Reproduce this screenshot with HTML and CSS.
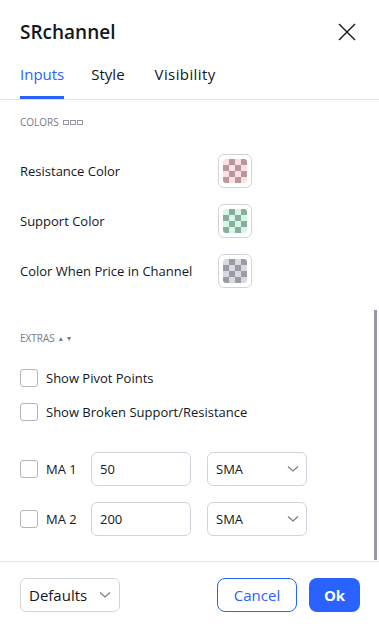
FILE: index.html
```html
<!DOCTYPE html>
<html lang="en">
<head>
  <meta charset="UTF-8" />
  <meta name="viewport" content="width=device-width, initial-scale=1.0"/>
  <title>SRchannel</title>
  <link rel="stylesheet" href="styles.css">
</head>
<body>
  <div class="dialog">
    <div class="header">
      <h1 class="title">SRchannel</h1>
      <button class="close" aria-label="Close">
        <svg width="18" height="18" viewBox="0 0 18 18"><path d="M1 1l16 16M17 1L1 17" stroke="#131722" stroke-width="1.4" fill="none"/></svg>
      </button>
    </div>
    <div class="tabs">
      <div class="tab active">Inputs</div>
      <div class="tab">Style</div>
      <div class="tab">Visibility</div>
    </div>

    <div class="content">
      <div class="group-title">COLORS <span class="boxes"><i></i><i></i><i></i></span></div>

      <div class="row">
        <span class="label">Resistance Color</span>
        <div class="swatch"><div class="checker pink"></div></div>
      </div>
      <div class="row">
        <span class="label">Support Color</span>
        <div class="swatch"><div class="checker green"></div></div>
      </div>
      <div class="row">
        <span class="label">Color When Price in Channel</span>
        <div class="swatch"><div class="checker gray"></div></div>
      </div>

      <div class="group-title extras">EXTRAS <span class="arrows">▴ ▾</span></div>

      <label class="check-row"><span class="box"></span>Show Pivot Points</label>
      <label class="check-row"><span class="box"></span>Show Broken Support/Resistance</label>

      <div class="ma-rows">
        <div class="ma-row">
          <label class="ma-check"><span class="box"></span>MA 1</label>
          <div class="field">50</div>
          <div class="field select">SMA
            <svg width="12" height="8" viewBox="0 0 12 8"><path d="M1 1.5l5 4.5 5-4.5" stroke="#787b86" stroke-width="1.2" fill="none"/></svg>
          </div>
        </div>
        <div class="ma-row">
          <label class="ma-check"><span class="box"></span>MA 2</label>
          <div class="field">200</div>
          <div class="field select">SMA
            <svg width="12" height="8" viewBox="0 0 12 8"><path d="M1 1.5l5 4.5 5-4.5" stroke="#787b86" stroke-width="1.2" fill="none"/></svg>
          </div>
        </div>
      </div>

      <div class="scroll-thumb"></div>
    </div>

    <div class="footer">
      <div class="defaults">Defaults
        <svg width="12" height="8" viewBox="0 0 12 8"><path d="M1 1.5l5 4.5 5-4.5" stroke="#787b86" stroke-width="1.2" fill="none"/></svg>
      </div>
      <div class="actions">
        <button class="btn cancel">Cancel</button>
        <button class="btn ok">Ok</button>
      </div>
    </div>
  </div>
</body>
</html>
```

FILE: styles.css
```css
body {
  margin: 0;
  background: #fff;
  font-family: "Open Sans", "DejaVu Sans", sans-serif;
  color: #131722;
}

.dialog {
  width: 379px;
  height: 626px;
  display: flex;
  flex-direction: column;
  box-sizing: border-box;
}

.header {
  display: flex;
  align-items: center;
  justify-content: space-between;
  padding: 18px 23px 0 20px;
  height: 28px;
}

.title {
  margin: 0;
  font-size: 19px;
  font-weight: 600;
  line-height: 28px;
}

.close {
  border: none;
  background: none;
  padding: 0;
  width: 18px;
  height: 18px;
  cursor: pointer;
}

.tabs {
  display: flex;
  gap: 27px;
  padding: 0 20px;
  margin-top: 16px;
  border-bottom: 1px solid #e0e3eb;
  height: 37px;
}

.tab {
  font-size: 15px;
  line-height: 22px;
  padding-top: 1px;
  color: #131722;
  box-sizing: border-box;
}

.tab:last-child {
  margin-left: 3px;
  letter-spacing: 0.4px;
}

.tab.active {
  color: #2962ff;
  border-bottom: 3px solid #2962ff;
}

.content {
  flex: 1;
  position: relative;
  padding: 0 20px;
}

.group-title {
  font-size: 10px;
  color: #787b86;
  line-height: 14px;
  margin-top: 15px;
  display: flex;
  align-items: center;
  gap: 4px;
}

.boxes {
  display: flex;
  gap: 1px;
}

.boxes i {
  width: 4px;
  height: 3px;
  border: 1px solid #9598a1;
}

.arrows {
  font-size: 8px;
  letter-spacing: 1px;
}

.row {
  display: flex;
  align-items: center;
  height: 34px;
  margin-bottom: 16px;
}

.group-title + .row {
  margin-top: 25px;
}

.label {
  font-size: 13px;
  width: 198px;
}

.swatch {
  width: 34px;
  height: 34px;
  box-sizing: border-box;
  border: 1px solid #d1d4dc;
  border-radius: 6px;
  display: flex;
  align-items: center;
  justify-content: center;
}

.checker {
  width: 24px;
  height: 24px;
  border-radius: 3px;
  background-size: 12px 12px;
}

.checker.pink {
  background-image: repeating-conic-gradient(#b6989e 0 25%, #ffe0e0 0 50%);
}

.checker.green {
  background-image: repeating-conic-gradient(#88ad9c 0 25%, #d6f7e8 0 50%);
}

.checker.gray {
  background-image: repeating-conic-gradient(#9b9ca3 0 25%, #d9dadf 0 50%);
}

.extras {
  margin-top: 43px;
  margin-bottom: 24px;
}

.check-row {
  display: flex;
  align-items: center;
  gap: 8px;
  font-size: 13px;
  height: 18px;
  margin-bottom: 16px;
}

.box {
  width: 18px;
  height: 18px;
  box-sizing: border-box;
  border: 1px solid #b2b5be;
  border-radius: 3px;
  flex-shrink: 0;
}

.ma-rows {
  margin-top: 31px;
  display: flex;
  flex-direction: column;
  gap: 16px;
}

.ma-row {
  display: flex;
  align-items: center;
}

.ma-check {
  display: flex;
  align-items: center;
  gap: 8px;
  font-size: 13px;
  width: 71px;
}

.field {
  width: 100px;
  height: 34px;
  box-sizing: border-box;
  border: 1px solid #d1d4dc;
  border-radius: 6px;
  padding: 0 8px;
  font-size: 13px;
  display: flex;
  align-items: center;
  margin-right: 16px;
}

.field.select {
  justify-content: space-between;
  padding-right: 7px;
}

.scroll-thumb {
  position: absolute;
  right: 2px;
  top: 210px;
  width: 3px;
  height: 250px;
  background: #9598a1;
}

.footer {
  border-top: 1px solid #e0e3eb;
  display: flex;
  justify-content: space-between;
  align-items: center;
  padding: 16px 19px 14px 20px;
  height: 34px;
}

.defaults {
  width: 100px;
  height: 34px;
  box-sizing: border-box;
  border: 1px solid #d1d4dc;
  border-radius: 6px;
  font-size: 15px;
  display: flex;
  align-items: center;
  justify-content: space-between;
  padding: 0 8px 0 8px;
}

.actions {
  display: flex;
  gap: 12px;
}

.btn {
  height: 34px;
  border-radius: 8px;
  font-family: "Open Sans", "DejaVu Sans", sans-serif;
  font-size: 15px;
  cursor: pointer;
}

.btn.cancel {
  width: 80px;
  border: 1px solid #2962ff;
  background: #fff;
  color: #2962ff;
}

.btn.ok {
  width: 51px;
  border: none;
  background: #2962ff;
  color: #fff;
  font-weight: 700;
}
```
